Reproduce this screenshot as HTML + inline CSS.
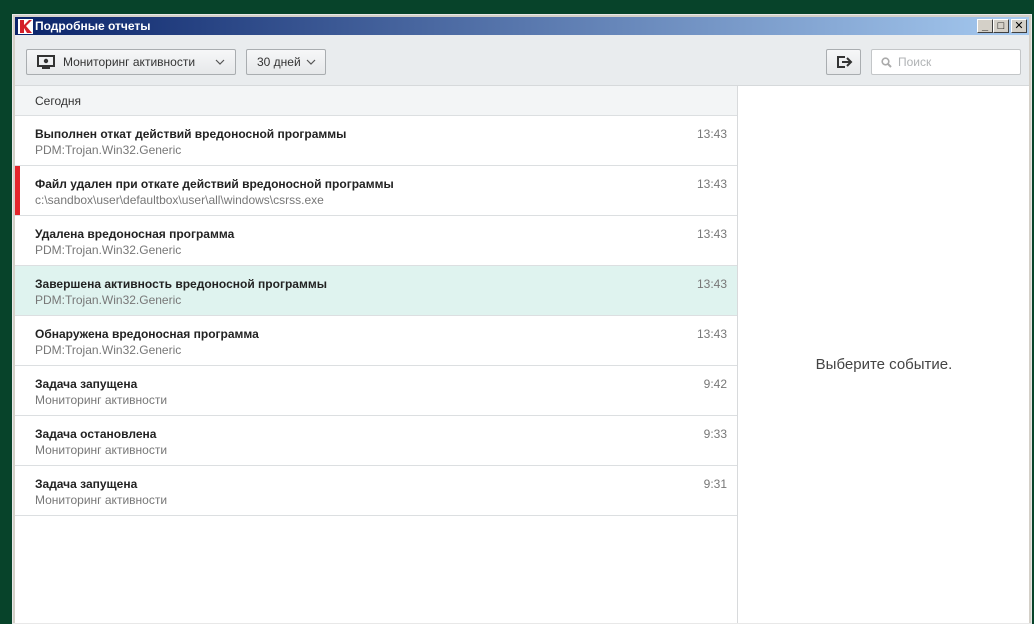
<!DOCTYPE html>
<html><head><meta charset="utf-8"><style>
*{margin:0;padding:0;box-sizing:border-box}
body{width:1034px;height:613px;background:#07432a;position:relative;overflow:hidden;font-family:"Liberation Sans","DejaVu Sans",sans-serif}
.win{position:absolute;left:12px;top:14px;width:1020px;height:610px;background:#d4d0c8;border:1px solid #e8e8e8}
.title{position:absolute;left:2px;top:2px;right:2px;height:19px;background:linear-gradient(90deg,#0a246a,#a6caf0);color:#fff;font-weight:bold;font-size:12px;line-height:19px;padding-left:20px}
.logo{position:absolute;left:3px;top:2px;width:15px;height:15px;background:#fff}
.btns{position:absolute;right:2px;top:2px}
.wb{display:inline-block;width:16px;height:14px;background:#d4d0c8;border:1px solid;border-color:#fff #404040 #404040 #fff;font-size:11px;color:#000;text-align:center;line-height:12px;font-weight:bold;vertical-align:top}
.content{position:absolute;left:2px;top:20px;right:2px;bottom:0;background:#fff}
.tool{position:absolute;left:0;top:0;right:0;height:51px;background:#e9ecee;border-bottom:1px solid #d6d9db}
.dd{position:absolute;top:14px;height:26px;border:1px solid #a9adb0;border-radius:2px;background:linear-gradient(#f6f7f8,#e6e8ea);font-size:12px;color:#333;line-height:24px}
.search{position:absolute;left:856px;top:14px;width:150px;height:26px;border:1px solid #c3c6c8;border-radius:2px;background:#fff;font-size:12px;color:#b0b3b5;line-height:24px;padding-left:26px}
.list{position:absolute;left:0;top:51px;width:723px;bottom:0;border-right:1px solid #d8dadc}
.hdr{height:30px;background:#f3f5f6;border-bottom:1px solid #dcdfe1;font-size:12px;color:#333;line-height:30px;padding-left:20px}
.row{height:50px;border-bottom:1px solid #dcdfe1;position:relative;padding:10px 0 0 20px}
.row b{display:block;font-size:12px;color:#222;line-height:16px}
.row span{display:block;font-size:12px;color:#777;line-height:16px}
.row i{position:absolute;right:10px;top:11px;font-style:normal;font-size:12px;color:#777}
.sel{background:#dff3ef}
.red{position:absolute;left:0;top:0;width:5px;height:49px;background:#e3262c}
.right{position:absolute;left:724px;top:51px;right:0;bottom:0;text-align:center;font-size:15px;color:#444;padding-top:270px}
</style></head><body>
<div class="win">
<div class="title"><div class="logo"><svg width="15" height="15"><path d="M2 1h4v5l5-5h3l-6 6 6 7H9l-3-5v5H2z" fill="#d4202a"/></svg></div>Подробные отчеты
<div class="btns"><span class="wb">_</span><span class="wb">□</span><span class="wb" style="margin-left:2px">✕</span></div></div>
<div class="content">
<div class="tool">
<div class="dd" style="left:11px;width:210px;padding-left:36px"><svg style="position:absolute;left:10px;top:5px" width="18" height="14"><rect x="1" y="1" width="16" height="10" fill="none" stroke="#333" stroke-width="2"/><circle cx="9" cy="6" r="2.2" fill="#333"/><rect x="5" y="12" width="8" height="2" fill="#333"/></svg>Мониторинг активности<svg style="position:absolute;right:10px;top:9px" width="10" height="6"><path d="M1 1l4 4 4-4" fill="none" stroke="#555" stroke-width="1.2"/></svg></div>
<div class="dd" style="left:231px;width:80px;padding-left:10px">30 дней<svg style="position:absolute;right:9px;top:9px" width="10" height="6"><path d="M1 1l4 4 4-4" fill="none" stroke="#555" stroke-width="1.2"/></svg></div>
<div class="dd" style="left:811px;width:35px"><svg style="position:absolute;left:9px;top:4px" width="18" height="16"><path d="M9 3H2v10h7" fill="none" stroke="#333" stroke-width="2"/><path d="M6 8h8M11 4l4 4-4 4" fill="none" stroke="#333" stroke-width="2"/></svg></div>
<div class="search"><svg style="position:absolute;left:9px;top:7px" width="11" height="11"><circle cx="4.5" cy="4.5" r="3.3" fill="none" stroke="#aaa" stroke-width="1.6"/><path d="M7 7l3 3" stroke="#aaa" stroke-width="2"/></svg>Поиск</div>
</div>
<div class="list">
<div class="hdr">Сегодня</div>
<div class="row"><b>Выполнен откат действий вредоносной программы</b><span>PDM:Trojan.Win32.Generic</span><i>13:43</i></div>
<div class="row"><div class="red"></div><b>Файл удален при откате действий вредоносной программы</b><span>c:\sandbox\user\defaultbox\user\all\windows\csrss.exe</span><i>13:43</i></div>
<div class="row"><b>Удалена вредоносная программа</b><span>PDM:Trojan.Win32.Generic</span><i>13:43</i></div>
<div class="row sel"><b>Завершена активность вредоносной программы</b><span>PDM:Trojan.Win32.Generic</span><i>13:43</i></div>
<div class="row"><b>Обнаружена вредоносная программа</b><span>PDM:Trojan.Win32.Generic</span><i>13:43</i></div>
<div class="row"><b>Задача запущена</b><span>Мониторинг активности</span><i>9:42</i></div>
<div class="row"><b>Задача остановлена</b><span>Мониторинг активности</span><i>9:33</i></div>
<div class="row"><b>Задача запущена</b><span>Мониторинг активности</span><i>9:31</i></div>
</div>
<div class="right">Выберите событие.</div>
</div></div>
</body></html>
